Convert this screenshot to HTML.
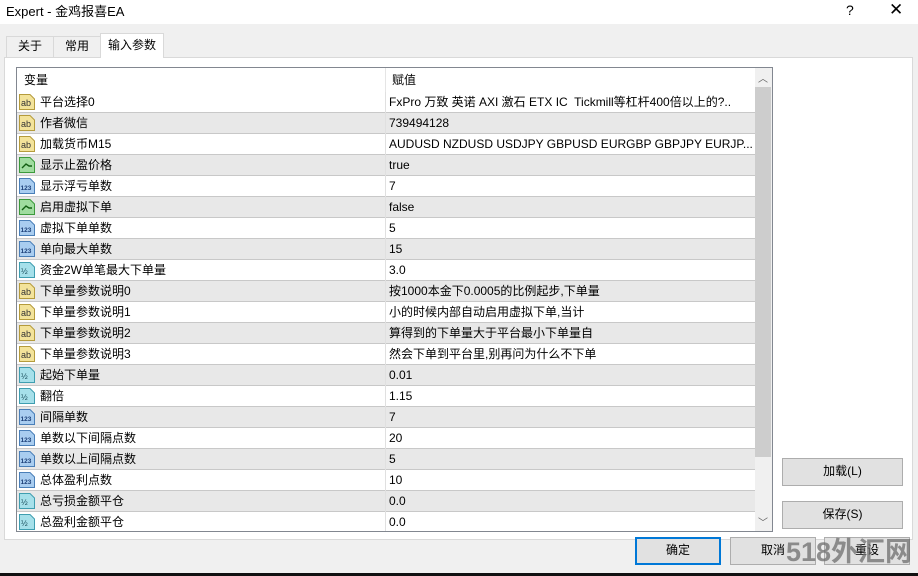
<!DOCTYPE html>
<html><head><meta charset="utf-8"><style>
*{margin:0;padding:0;box-sizing:border-box}
html,body{width:918px;height:576px;overflow:hidden}
body{background:#f0f0f0;position:relative;font-family:"Liberation Sans","Noto Sans CJK SC",sans-serif;font-size:12px;color:#000}
.a{position:absolute;white-space:nowrap}
.title{left:0;top:0;width:918px;height:24px;background:#fff}
.tab{position:absolute;border:1px solid #d9d9d9;border-bottom:none;background:#f0f0f0;text-align:center;font-size:12px}
.panel{left:4px;top:57px;width:909px;height:483px;background:#fff;border:1px solid #d9d9d9}
.list{left:16px;top:67px;width:757px;height:465px;border:1px solid #828790;background:#fff;overflow:hidden}
.row{position:absolute;left:0;width:738px;height:21px;border-bottom:1px solid #c8c8c8}
.row.g{background:#e8e8e8}
.row .n{position:absolute;left:23px;top:0;line-height:20px;white-space:nowrap}
.row .v{position:absolute;left:372px;top:0;line-height:20px;white-space:nowrap}
.row .d{position:absolute;left:368px;top:0;width:1px;height:21px;background:#e0e0e0}
.row svg{position:absolute;left:2px;top:2px}
.btn{position:absolute;background:#e1e1e1;border:1px solid #adadad;text-align:center;font-size:12px;line-height:25px;white-space:nowrap}
</style></head><body>
<div class="a title"></div>
<div class="a" style="left:6px;top:0;line-height:24px;font-size:13px">Expert - 金鸡报喜EA</div>
<div class="a" style="left:846px;top:0;line-height:20px;font-size:14px">?</div>
<div class="a" style="left:889px;top:0;line-height:20px;font-size:17px">✕</div>
<div class="a panel"></div>
<div class="tab" style="left:6px;top:36px;width:48px;height:21px;line-height:19px">关于</div>
<div class="tab" style="left:53px;top:36px;width:48px;height:21px;line-height:19px">常用</div>
<div class="tab" style="left:100px;top:33px;width:64px;height:25px;background:#fff;line-height:22px">输入参数</div>
<div class="a list">
<div class="a" style="left:0;top:0;width:738px;height:24px;background:#fff"></div>
<div class="a" style="left:7px;top:0;line-height:24px">变量</div>
<div class="a" style="left:368px;top:0;width:1px;height:24px;background:#e5e5e5"></div>
<div class="a" style="left:375px;top:0;line-height:24px">赋值</div>
<div id="rows"></div>
<div class="a" style="left:738px;top:0;width:17px;height:463px;background:#f0f0f0"></div>
<div class="a" style="left:738px;top:19px;width:16px;height:370px;background:#cdcdcd"></div>
<div class="a" style="left:741px;top:2px;font-size:10px;color:#606060">︿</div>
<div class="a" style="left:741px;top:446px;font-size:10px;color:#606060">﹀</div>
</div>
<div class="btn" style="left:782px;top:458px;width:121px;height:28px">加载(L)</div>
<div class="btn" style="left:782px;top:501px;width:121px;height:28px">保存(S)</div>
<div class="btn" style="left:635px;top:537px;width:86px;height:28px;border:2px solid #0078d7;line-height:23px">确定</div>
<div class="btn" style="left:730px;top:537px;width:86px;height:28px">取消</div>
<div class="btn" style="left:824px;top:537px;width:86px;height:28px">重设</div>
<div class="a" style="left:786px;top:536px;font-size:27px;line-height:32px;font-weight:bold;color:rgba(110,110,110,0.75)">518外汇网</div>
<div class="a" style="left:0;top:573px;width:918px;height:3px;background:#111"></div>
<script>
var ic={
ab:'<svg width="16" height="16"><path d="M0.5 0.5H11L15.5 5V15.5H0.5Z" fill="#f3e39a" stroke="#b59b3c"/><text x="2" y="12" font-size="9" font-family="Liberation Sans" fill="#333">ab</text></svg>',
n:'<svg width="16" height="16"><path d="M0.5 0.5H11L15.5 5V15.5H0.5Z" fill="#a9cdf0" stroke="#4a7fb8"/><text x="1.5" y="12" font-size="6.5" font-weight="bold" font-family="Liberation Sans" fill="#1c3f78">123</text></svg>',
b:'<svg width="16" height="16"><path d="M0.5 0.5H11L15.5 5V15.5H0.5Z" fill="#9fdc9f" stroke="#3c9a3c"/><path d="M3 11L7 7L10 9L13 9" fill="none" stroke="#135f13" stroke-width="1.4"/></svg>',
f:'<svg width="16" height="16"><path d="M0.5 0.5H11L15.5 5V15.5H0.5Z" fill="#a6e0ea" stroke="#3f9eb0"/><text x="2" y="12" font-size="8" font-family="Liberation Sans" fill="#1a4e5c">½</text></svg>'};
var d=[['ab','平台选择0','FxPro 万致 英诺 AXI 激石 ETX IC&nbsp; Tickmill等杠杆400倍以上的?..'],['ab','作者微信','739494128'],['ab','加载货币M15','AUDUSD NZDUSD USDJPY GBPUSD EURGBP GBPJPY EURJP...'],['b','显示止盈价格','true'],['n','显示浮亏单数','7'],['b','启用虚拟下单','false'],['n','虚拟下单单数','5'],['n','单向最大单数','15'],['f','资金2W单笔最大下单量','3.0'],['ab','下单量参数说明0','按1000本金下0.0005的比例起步,下单量'],['ab','下单量参数说明1','小的时候内部自动启用虚拟下单,当计'],['ab','下单量参数说明2','算得到的下单量大于平台最小下单量自'],['ab','下单量参数说明3','然会下单到平台里,别再问为什么不下单'],['f','起始下单量','0.01'],['f','翻倍','1.15'],['n','间隔单数','7'],['n','单数以下间隔点数','20'],['n','单数以上间隔点数','5'],['n','总体盈利点数','10'],['f','总亏损金额平仓','0.0'],['f','总盈利金额平仓','0.0']];
var h='';d.forEach(function(r,i){h+='<div class="row'+(i%2?' g':'')+'" style="top:'+(24+i*21)+'px">'+ic[r[0]]+'<span class="n">'+r[1]+'</span><span class="d"></span><span class="v">'+r[2]+'</span></div>';});
document.getElementById('rows').innerHTML=h;
</script>
</body></html>
